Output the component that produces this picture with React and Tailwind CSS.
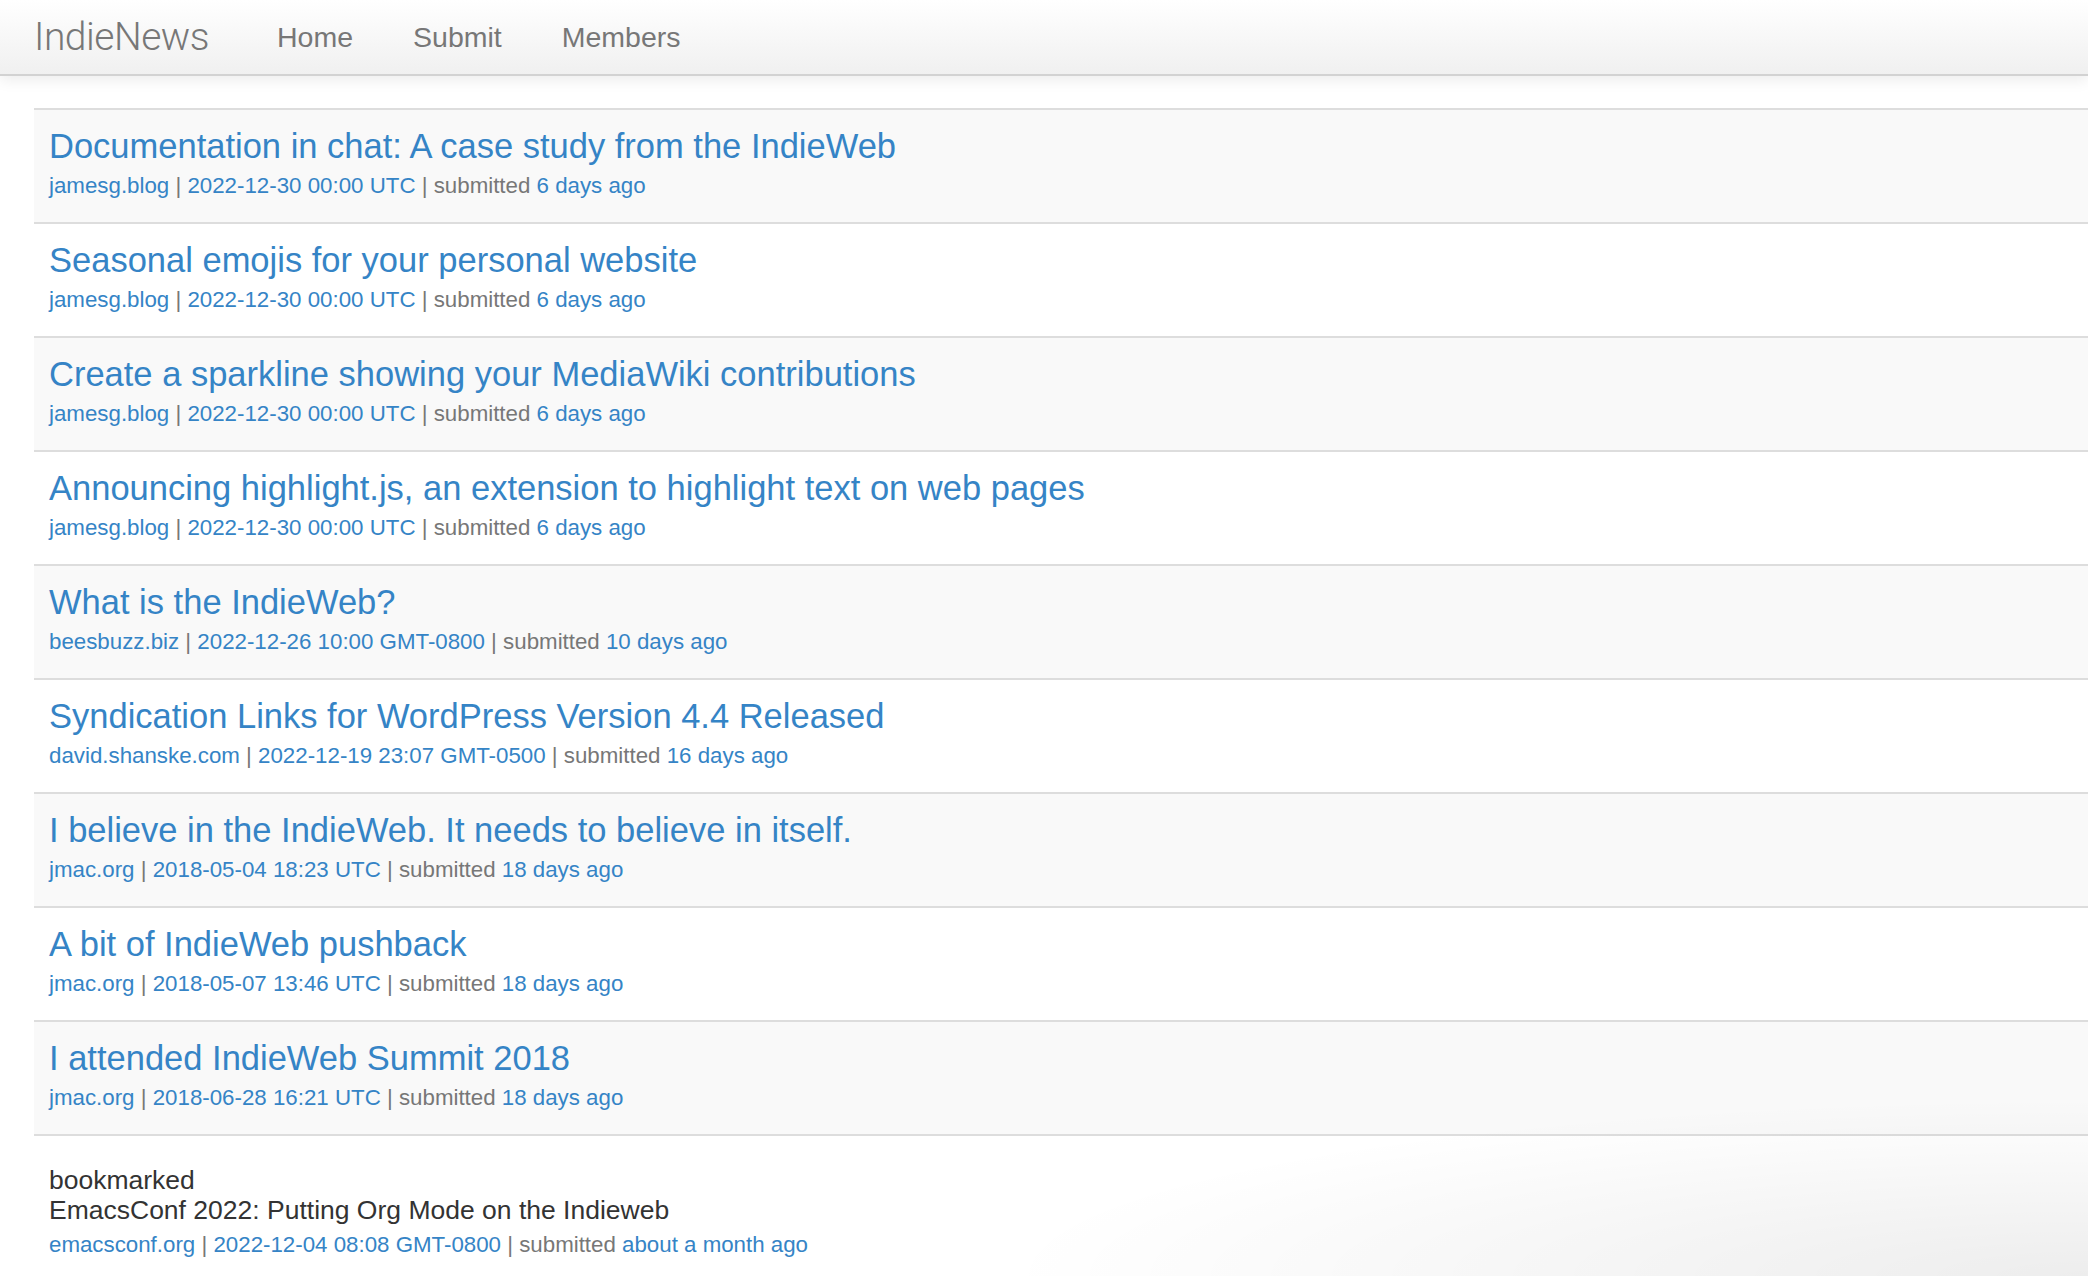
const posts = [
  { title: 'Documentation in chat: A case study from the IndieWeb', site: 'jamesg.blog', date: '2022-12-30 00:00 UTC', ago: '6 days ago' },
  { title: 'Seasonal emojis for your personal website', site: 'jamesg.blog', date: '2022-12-30 00:00 UTC', ago: '6 days ago' },
  { title: 'Create a sparkline showing your MediaWiki contributions', site: 'jamesg.blog', date: '2022-12-30 00:00 UTC', ago: '6 days ago' },
  { title: 'Announcing highlight.js, an extension to highlight text on web pages', site: 'jamesg.blog', date: '2022-12-30 00:00 UTC', ago: '6 days ago' },
  { title: 'What is the IndieWeb?', site: 'beesbuzz.biz', date: '2022-12-26 10:00 GMT-0800', ago: '10 days ago' },
  { title: 'Syndication Links for WordPress Version 4.4 Released', site: 'david.shanske.com', date: '2022-12-19 23:07 GMT-0500', ago: '16 days ago' },
  { title: 'I believe in the IndieWeb. It needs to believe in itself.', site: 'jmac.org', date: '2018-05-04 18:23 UTC', ago: '18 days ago' },
  { title: 'A bit of IndieWeb pushback', site: 'jmac.org', date: '2018-05-07 13:46 UTC', ago: '18 days ago' },
  { title: 'I attended IndieWeb Summit 2018', site: 'jmac.org', date: '2018-06-28 16:21 UTC', ago: '18 days ago' },
];

const Meta = ({ site, date, ago }) => (
  <div className="text-[22.3px] leading-[30px] text-[#777]">
    <a href="#" className="text-[#3584c6]">{site}</a> | <a href="#" className="text-[#3584c6]">{date}</a> | submitted <a href="#" className="text-[#3584c6]">{ago}</a>
  </div>
);

export default function App() {
  return (
    <div className="min-h-[1276px] bg-white font-['Liberation_Sans',Arial,sans-serif] overflow-hidden relative">
      <header className="h-[76px] bg-gradient-to-b from-white to-[#f0f0f0] border-b-2 border-[#d2d2d2] shadow-[0_4px_14px_rgba(0,0,0,0.08)] flex items-center pl-[34px]">
        <div className="text-[39px] font-light text-[#777] tracking-[-0.5px] font-['Roboto','Liberation_Sans',sans-serif] mr-[68px]">IndieNews</div>
        <nav className="flex items-center gap-[60px] text-[28.5px] text-[#777]">
          <a href="#">Home</a>
          <a href="#">Submit</a>
          <a href="#">Members</a>
        </nav>
      </header>

      <main className="ml-[34px] mt-[32px]">
        <div className="border-b-2 border-[#ddd]">
          {posts.map((p, i) => (
            <div key={i} className={`border-t-2 border-[#ddd] pl-[15px] pt-[16px] pb-[21px] ${i % 2 === 0 ? 'bg-[#f9f9f9]' : 'bg-white'}`}>
              <a href="#" className="block text-[34.5px] leading-[40px] text-[#3584c6] mb-[5px]">{p.title}</a>
              <Meta site={p.site} date={p.date} ago={p.ago} />
            </div>
          ))}
        </div>

        <div className="pl-[15px] pt-[29px]">
          <div className="text-[26.5px] leading-[30px] text-[#333]">bookmarked</div>
          <div className="text-[26.5px] leading-[30px] text-[#333] mb-[5px]">EmacsConf 2022: Putting Org Mode on the Indieweb</div>
          <Meta site="emacsconf.org" date="2022-12-04 08:08 GMT-0800" ago="about a month ago" />
        </div>
      </main>

      <div className="pointer-events-none absolute bottom-0 right-0 w-[1100px] h-[180px] bg-[radial-gradient(ellipse_at_bottom_right,rgba(0,0,0,0.07),rgba(0,0,0,0)_70%)]" />
    </div>
  );
}
